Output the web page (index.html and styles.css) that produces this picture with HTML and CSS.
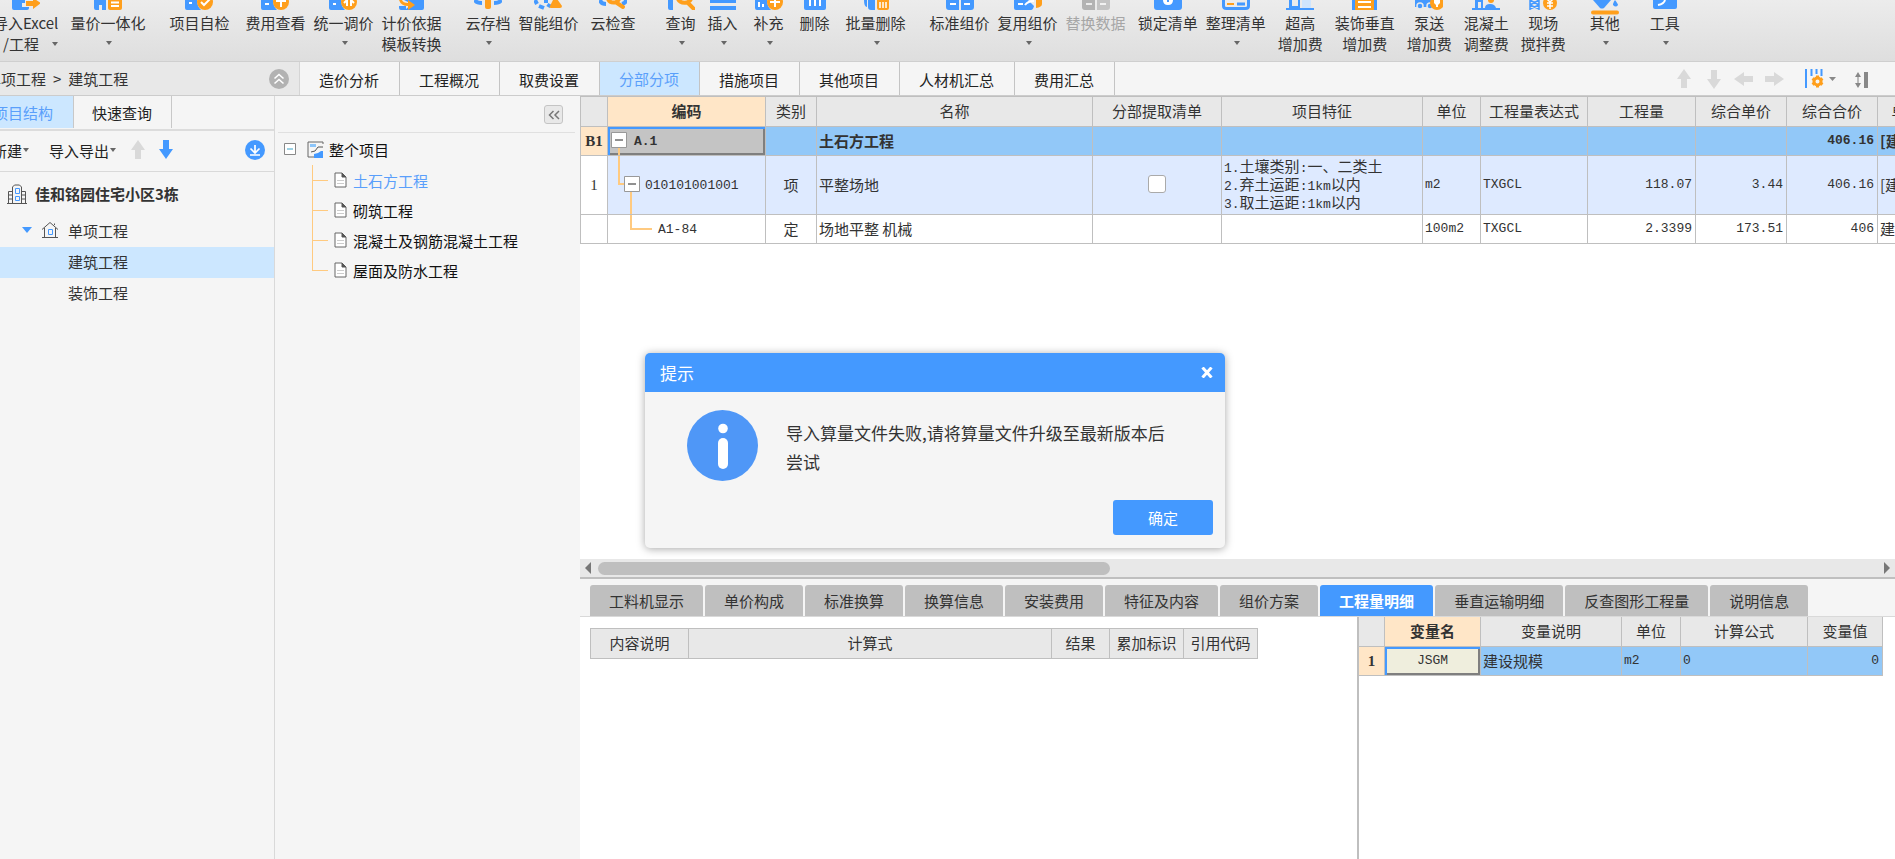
FILE: index.html
```html
<!DOCTYPE html>
<html lang="zh-CN">
<head>
<meta charset="utf-8">
<title>建筑工程</title>
<link rel="stylesheet" href="styles.css">
</head>
<body>
<header class="ribbon">
  <button class="tool first"><svg class="ico" viewBox="0 0 28 10"><path class="b" d="M0 0h13v3h-3v4h7v1q0 2-2 2H2q-2 0-2-2z"/><path class="o" d="M14 1h7v-3l8 5-8 6V6h-7z"/></svg><span>导入Excel</span><span class="row2">/工程<i class="caret"></i></span></button>
  <button class="tool g12"><svg class="ico" viewBox="0 0 28 10"><path class="b" d="M0 0h12v10H8V5H5v5H2Q0 10 0 8z"/><path class="o" d="M14 0h14v8q0 2-2 2H16q-2 0-2-2z"/><path class="wl" d="M17 2.500h8M17 6h8"/></svg><span>量价一体化</span><i class="caret"></i></button>
  <button class="tool g24"><svg class="ico" viewBox="0 0 28 10"><path class="b" d="M0 0h12q0 6 4 10H2q-2 0-2-2z"/><path class="wl" d="M4 3h3"/><circle class="o" cx="20" cy="2" r="8"/><path class="wl" d="M16 2l3 3 6-6"/></svg><span>项目自检</span></button>
  <button class="tool g16"><svg class="ico" viewBox="0 0 28 10"><path class="b" d="M0 0h12q0 6 4 10H2q-2 0-2-2z"/><path class="wl" d="M4 4h4"/><circle class="o" cx="20" cy="2" r="8"/><path class="wl" d="M15 1h10M20 2v5"/></svg><span>费用查看</span></button>
  <button class="tool g8"><svg class="ico" viewBox="0 0 28 10"><path class="b" d="M0 0h12q0 6 4 10H2q-2 0-2-2z"/><path class="wl" d="M4 4h3"/><circle class="o" cx="20" cy="2" r="8"/><path class="wl" d="M18 0v6M22 0v6M18 0l-3 3M22 0l3 3"/></svg><span>统一调价</span><i class="caret"></i></button>
  <button class="tool g8"><svg class="ico" viewBox="0 0 28 10"><path class="b" d="M7 0h20v8q0 2-2 2H4q-2 0-2-2V6h7v3l6-5z"/><path class="o" d="M2 0h3q1 3 6 3V0l7 5-7 5V6Q4 6 2 0z"/></svg><span>计价依据</span><span>模板转换</span></button>
  <button class="tool g24"><svg class="ico" viewBox="0 0 28 10"><path class="bl" d="M1 0q1 3 7 3M27 0q-1 3-7 3"/><path class="o" d="M11 0h6v7q0 2-2 2h-2q-2 0-2-2z"/></svg><span>云存档</span><i class="caret"></i></button>
  <button class="tool g8"><svg class="ico" viewBox="0 0 28 10"><path class="bl" d="M1 0l2 4M5 6l5 2M12 0v3M14 7l2-3"/><path class="o" d="M21-4l7 10q0 2-2 2H17q-2 0-1-2z"/></svg><span>智能组价</span></button>
  <button class="tool g12"><svg class="ico" viewBox="0 0 28 10"><path class="bl" d="M1 0q1 4 6 4M27 0q0 3-4 4"/><path class="ol" d="M9-1a6 6 0 0 0 11 0M18 3l6 4"/></svg><span>云检查</span></button>
  <button class="tool g30"><svg class="ico" viewBox="0 0 28 10"><path class="b" d="M1 0h5v10H3q-2 0-2-2z"/><path class="ol" d="M11-1a7 6 0 0 0 13 0M21 3l6 6"/></svg><span>查询</span><i class="caret"></i></button>
  <button class="tool g12"><svg class="ico" viewBox="0 0 28 10"><path class="bl" d="M1 1h26M1 8h26"/></svg><span>插入</span><i class="caret"></i></button>
  <button class="tool g16"><svg class="ico" viewBox="0 0 28 10"><path class="b" d="M0 0h12q0 6 4 10H2q-2 0-2-2z"/><path class="wl" d="M4 2v5M8 4v3"/><circle class="o" cx="20" cy="2" r="8"/><path class="wl" d="M15 2h10M20-2v9"/></svg><span>补充</span><i class="caret"></i></button>
  <button class="tool g16"><svg class="ico" viewBox="0 0 28 10"><path class="b" d="M3 0h22v8q0 2-2 2H5q-2 0-2-2z"/><path class="wl" d="M9 0v6M14 0v6M19 0v6"/></svg><span>删除</span></button>
  <button class="tool g16"><svg class="ico" viewBox="0 0 28 10"><path class="b" d="M2 0h3v7q-3 0-3-7zM6 0h7v10H9q-3 0-3-3z"/><path class="o" d="M15 0h12v8q0 2-2 2h-8q-2 0-2-2z"/><path class="wl thin" d="M18 2v6M21 2v6M24 2v6"/></svg><span>批量删除</span><i class="caret"></i></button>
  <button class="tool g24"><svg class="ico" viewBox="0 0 28 10"><path class="b" d="M0 0h13v10H3q-3 0-3-3zM15 0h13v7q0 3-3 3H15z"/><path class="wl" d="M4 4h6M18 4h6"/></svg><span>标准组价</span></button>
  <button class="tool g8"><svg class="ico" viewBox="0 0 28 10"><path class="b" d="M0 0h14l6 6q-1 4-3 4H2q-2 0-2-2z"/><path class="wl" d="M4 4h5M11 5q3-4 9-4"/><path class="o" d="M22 0h6v4q0 3-6 4z"/></svg><span>复用组价</span><i class="caret"></i></button>
  <button class="tool g8 off" disabled><svg class="ico" viewBox="0 0 28 10"><path fill="#b3b3b3" d="M0 0h13v10H3q-3 0-3-3z"/><path fill="#c4c4c4" d="M15 0h13v7q0 3-3 3H15z"/><path class="wl thin" d="M4 4h6M18 4h6"/></svg><span>替换数据</span></button>
  <button class="tool g12"><svg class="ico" viewBox="0 0 28 10"><path class="b" d="M0 0h28v7q0 3-3 3H3q-3 0-3-3z"/><path fill="#fff" d="M9 0h10q0 5-5 5T9 0z"/><path class="b" d="M13 0h2v2h-2z"/></svg><span>锁定清单</span></button>
  <button class="tool g8"><svg class="ico" viewBox="0 0 28 10"><path class="bl frame" d="M1.500 0v6q0 2.500 3 2.500h19q3 0 3-2.500V0M15 4h8"/><path class="o" d="M5 3h7v2H5z"/></svg><span>整理清单</span><i class="caret"></i></button>
  <button class="tool g12"><svg class="ico" viewBox="0 0 28 10"><path class="b" d="M0 8h28v2H0zM3 0h3v8H3zM6 6h6V0h2v8H6z"/><path fill="#cfe5fd" d="M16 0h9v8h-9z"/></svg><span>超高</span><span>增加费</span></button>
  <button class="tool g12"><svg class="ico" viewBox="0 0 28 10"><path class="b" d="M1 0h3v10H1zM23 0h3v10h-3z"/><path class="o" d="M4 0h19v10H4z"/><path class="wl" d="M7 2h13M7 7h13"/></svg><span>装饰垂直</span><span>增加费</span></button>
  <button class="tool g12"><svg class="ico" viewBox="0 0 28 10"><path class="b" d="M0 0l16-1v8H0z"/><circle class="b ring" cx="5" cy="6" r="3"/><circle class="b ring" cx="15" cy="6" r="3"/><circle class="o" cx="22" cy="3" r="7"/><path fill="#fff" d="M19 0h6v3l-2 2v2h-2V5l-2-2z"/></svg><span>泵送</span><span>增加费</span></button>
  <button class="tool g12"><svg class="ico" viewBox="0 0 28 10"><path class="b" d="M0 8h28v2H0zM3 0h8v8H9V2H6v6H3zM13 8q0-4 5-4t6 4z"/><circle class="o" cx="19" cy="0" r="3"/></svg><span>混凝土</span><span>调整费</span></button>
  <button class="tool g12"><svg class="ico" viewBox="0 0 28 10"><path class="bl thin" d="M1 0v10M10 0v10M1 0l9 5M10 0L1 5M1 9l9-4M10 9L1 5"/><circle class="o" cx="21" cy="3" r="7"/><path class="wl thin" d="M18 3h6M18 6h6M21 2v7M18-1l3 3 3-3"/></svg><span>现场</span><span>搅拌费</span></button>
  <button class="tool g24"><svg class="ico low" viewBox="0 0 28 15"><path class="b" d="M2 0h18l-7 8q-2 1-4 0zM22 4q1-3 2-4 3 4 3 5-2 3-5 0z"/><path class="ol" d="M2 12.500h24"/></svg><span>其他</span><i class="caret"></i></button>
  <button class="tool g30"><svg class="ico" viewBox="0 0 28 10"><path class="b" d="M2 0h24v7q0 2-2 2H4q-2 0-2-2z"/><path class="wl" d="M7 5q6-1 7-5"/></svg><span>工具</span><i class="caret"></i></button>
</header>

<nav class="tabbar">
  <div class="crumb"><span class="crumb-text">单项工程<span class="sep">&gt;</span>建筑工程</span>
    <button class="round" aria-label="收起"><svg width="20" height="20" viewBox="0 0 20 20"><circle cx="10" cy="10" r="10" fill="#b2b2b2"/><path d="M5.500 9.500L10 5.500l4.500 4M5.500 14.500L10 10.500l4.500 4" fill="none" stroke="#fff" stroke-width="1.600"/></svg></button>
  </div>
  <button class="tab">造价分析</button><button class="tab">工程概况</button><button class="tab">取费设置</button><button class="tab on">分部分项</button><button class="tab">措施项目</button><button class="tab">其他项目</button><button class="tab">人材机汇总</button><button class="tab">费用汇总</button>
  <div class="tab-tools">
    <button aria-label="上移"><svg width="20" height="20"><path d="M10 0l7 10h-4v9H7v-9H3z" fill="#d9d9d9"/></svg></button>
    <button aria-label="下移"><svg width="20" height="20"><path d="M10 20l7-10h-4V1H7v9H3z" fill="#d9d9d9"/></svg></button>
    <button aria-label="左移"><svg width="20" height="20"><path d="M0 10l10-7v4h9v6h-9v4z" fill="#d9d9d9"/></svg></button>
    <button aria-label="右移"><svg width="20" height="20"><path d="M20 10l-10-7v4H1v6h9v4z" fill="#d9d9d9"/></svg></button>
    <button class="cols" aria-label="列设置"><svg width="32" height="20"><path d="M2 0v19M7.500 0v7M12.500 0v5M17.500 0v7" stroke="#49f" stroke-width="2"/><circle cx="13.500" cy="12.500" r="3.500" fill="none" stroke="#ff9f1c" stroke-width="3" /><path d="M8.500 9.500l2 1.500M8.500 15.500l2-1.500M18.500 9.500l-2 1.500M18.500 15.500l-2-1.500M13.500 6.500v3M13.500 18.500v-3" stroke="#ff9f1c" stroke-width="3"/><path d="M25 8h7l-3.500 4z" fill="#888"/></svg></button>
    <button class="sort" aria-label="行高"><svg width="16" height="20"><path d="M1 8l3-5 3 5zM1 14l3 5 3-5z" fill="#888"/><path d="M4 8v6" stroke="#bbb" stroke-width="2"/><path d="M10 3h4v16h-4z" fill="#888"/></svg></button>
  </div>
</nav>

<div class="work">
  <aside class="project">
    <div class="side-tabs"><button class="side-tab cut on">项目结构</button><button class="side-tab">快速查询</button></div>
    <div class="side-tools">
      <button class="new">新建<i class="caret"></i></button>
      <button class="io">导入导出<i class="caret"></i></button>
      <button aria-label="上移"><svg width="16" height="20"><path d="M8 0l7 10h-4v9H5v-9H1z" fill="#d9d9d9"/></svg></button>
      <button class="down" aria-label="下移"><svg width="16" height="20"><path d="M8 19l7-10h-4V0H5v9H1z" fill="#49f"/></svg></button>
      <button class="load" aria-label="下载"><svg width="20" height="20"><circle cx="10" cy="10" r="10" fill="#49f"/><path d="M10 5v8M5.500 8.500L10 13l4.500-4.500M5 15h10" fill="none" stroke="#fff" stroke-width="1.700"/></svg></button>
    </div>
    <ul class="ptree">
      <li class="top"><svg width="20" height="20" fill="none" stroke="#555"><path d="M0 19.500h20M1.500 19V7.500h4M18.500 19V7.500h-4M5.500 19V3l2-2h5l2 2v16M2 11h3M2 15h3M15 11h3M15 15h3"/><path stroke="#49f" d="M8.500 4.500h4v5h-4zM8.500 12.500h4v4h-4z"/></svg><b>佳和铭园住宅小区3栋</b></li>
      <li class="unit"><svg width="10" height="6"><path d="M0 0h10L5 6z" fill="#49f"/></svg><svg width="18" height="18" fill="none" stroke="#555"><path d="M1 8.500L9 1.500l8 7M3.500 7v9.500h11V7M1 16.500h16M13.500 4V2.500"/><path stroke="#49f" d="M7.500 8.500h4v5h-4z"/></svg><span>单项工程</span></li>
      <li class="leaf on">建筑工程</li>
      <li class="leaf">装饰工程</li>
    </ul>
  </aside>

  <aside class="sections">
    <div class="sec-head"><button class="fold" aria-label="折叠"><svg width="18" height="18"><path d="M8.500 5L4.500 9l4 4M14 5l-4 4 4 4" fill="none" stroke="#777" stroke-width="1.500"/></svg></button></div>
    <div class="root"><svg width="12" height="12"><path d="M.5.5h11v11H.5z" fill="#fff" stroke="#888"/><path d="M3 6h6" stroke="#3ba4c9"/></svg><svg width="17" height="17" fill="none"><path d="M16 3V1H1v15h15" stroke="#666"/><path d="M3 3h6v3H3z" fill="#8cc5fa"/><path d="M4 11l4-1 3-4h5" stroke="#555"/><path d="M7 17v-4l4-1 3-2h2v7z" fill="#49f"/></svg><span>整个项目</span></div>
    <ul class="stree">
      <li class="on"><svg width="13" height="16"><path d="M1 1h7l4 4v10H1z" fill="#fff" stroke="#666"/><path d="M8 1v4h4z" fill="#555" stroke="#555"/><path d="M3 8.500h7M3 11.500h7" stroke="#ccc"/></svg>土石方工程</li>
      <li><svg width="13" height="16"><path d="M1 1h7l4 4v10H1z" fill="#fff" stroke="#666"/><path d="M8 1v4h4z" fill="#555" stroke="#555"/><path d="M3 8.500h7M3 11.500h7" stroke="#ccc"/></svg>砌筑工程</li>
      <li><svg width="13" height="16"><path d="M1 1h7l4 4v10H1z" fill="#fff" stroke="#666"/><path d="M8 1v4h4z" fill="#555" stroke="#555"/><path d="M3 8.500h7M3 11.500h7" stroke="#ccc"/></svg>混凝土及钢筋混凝土工程</li>
      <li><svg width="13" height="16"><path d="M1 1h7l4 4v10H1z" fill="#fff" stroke="#666"/><path d="M8 1v4h4z" fill="#555" stroke="#555"/><path d="M3 8.500h7M3 11.500h7" stroke="#ccc"/></svg>屋面及防水工程</li>
    </ul>
  </aside>

  <main class="content">
    <section class="bill">
      <table class="grid bill-grid">
        <colgroup><col class="c-no"><col class="c-code"><col class="c-kind"><col class="c-name"><col class="c-pick"><col class="c-feat"><col class="c-unit"><col class="c-expr"><col class="c-qty"><col class="c-price"><col class="c-price"><col class="c-file"></colgroup>
        <thead><tr><th></th><th class="hot">编码</th><th>类别</th><th>名称</th><th>分部提取清单</th><th>项目特征</th><th>单位</th><th>工程量表达式</th><th>工程量</th><th>综合单价</th><th>综合合价</th><th>单价构成文件</th></tr></thead>
        <tbody>
          <tr class="part"><td class="no hot">B1</td><td class="code picked"><div class="node"><button class="twig" aria-label="折叠"><svg width="26" height="28"><path d="M11 21v8" stroke="#ffca80" stroke-width="2"/><path d="M3.500 5.500h15v15h-15z" fill="#fff" stroke="#999"/><path d="M7 13h8" stroke="#222"/></svg></button>A.1</div></td><td></td><td>土石方工程</td><td></td><td></td><td></td><td></td><td></td><td></td><td class="num">406.16</td><td>[建筑工程]</td></tr>
          <tr class="item"><td class="no">1</td><td class="code"><div class="node"><button class="twig" aria-label="折叠"><svg width="37" height="58"><path d="M11 0v28h6M23 36v22" stroke="#ffca80" stroke-width="2" fill="none"/><path d="M16.500 20.500h15v15h-15z" fill="#fff" stroke="#999"/><path d="M20 28h8" stroke="#222"/></svg></button>010101001001</div></td><td class="mid">项</td><td>平整场地</td><td class="mid"><input type="checkbox" aria-label="分部提取清单"></td><td class="feat"><span class="lat">1.</span>土壤类别<span class="lat">:</span>一、二类土<br><span class="lat">2.</span>弃土运距<span class="lat">:1km</span>以内<br><span class="lat">3.</span>取土运距<span class="lat">:1km</span>以内</td><td class="lat">m2</td><td class="lat">TXGCL</td><td class="num">118.07</td><td class="num">3.44</td><td class="num">406.16</td><td>[建筑工程]</td></tr>
          <tr class="quota"><td class="no"></td><td class="code"><div class="node"><svg width="50" height="28"><path d="M23 0v14h21" stroke="#ffca80" stroke-width="2" fill="none"/></svg>A1-84</div></td><td class="mid">定</td><td>场地平整 机械</td><td></td><td></td><td class="lat">100m2</td><td class="lat">TXGCL</td><td class="num">2.3399</td><td class="num">173.51</td><td class="num">406</td><td>建筑工程</td></tr>
        </tbody>
      </table>
    </section>
    <div class="hscroll"><svg width="8" height="12"><path d="M7 0v12L1 6z" fill="#777"/></svg><div class="track"><div class="thumb"></div></div><svg width="8" height="12"><path d="M1 0v12l6-6z" fill="#777"/></svg></div>
    <nav class="detail-tabs"><button>工料机显示</button><button>单价构成</button><button>标准换算</button><button>换算信息</button><button>安装费用</button><button>特征及内容</button><button>组价方案</button><button class="on">工程量明细</button><button>垂直运输明细</button><button>反查图形工程量</button><button>说明信息</button></nav>
    <section class="detail">
      <div class="calc">
        <table class="grid calc-grid"><colgroup><col class="k-desc"><col class="k-expr"><col class="k-res"><col class="k-flag"><col class="k-flag"></colgroup><thead><tr><th>内容说明</th><th>计算式</th><th>结果</th><th>累加标识</th><th>引用代码</th></tr></thead></table>
      </div>
      <div class="vars">
        <table class="grid var-grid"><colgroup><col class="v-no"><col class="v-name"><col class="v-desc"><col class="v-unit"><col class="v-expr"><col class="v-val"></colgroup>
          <thead><tr><th></th><th class="hot">变量名</th><th>变量说明</th><th>单位</th><th>计算公式</th><th>变量值</th></tr></thead>
          <tbody><tr><td class="no hot">1</td><td class="lat mid picked">JSGM</td><td>建设规模</td><td class="lat">m2</td><td class="lat">0</td><td class="num">0</td></tr></tbody></table>
      </div>
    </section>
  </main>
</div>

<div class="dialog" role="alertdialog" aria-labelledby="dlg-title">
  <div class="dlg-head"><span id="dlg-title">提示</span><button aria-label="关闭"><svg width="12" height="11"><path d="M1.500 0.500l9 10M10.500 0.500l-9 10" stroke="#fff" stroke-width="3"/></svg></button></div>
  <div class="dlg-body"><svg width="71" height="71"><circle cx="35.500" cy="35.500" r="35.500" fill="#4f97f7"/><circle cx="36" cy="18.500" r="4.800" fill="#fff"/><rect x="31" y="28" width="10" height="31" rx="5" fill="#fff"/></svg><p>导入算量文件失败,请将算量文件升级至最新版本后<br>尝试</p></div>
  <div class="dlg-foot"><button>确定</button></div>
</div>
</body>
</html>
```

FILE: styles.css
```css
* { box-sizing: border-box; }
html, body { height: 100%; }
body {
  margin: 0;
  display: flex;
  flex-direction: column;
  position: relative;
  overflow: hidden;
  background: #f5f5f5;
  color: #333;
  font: 15px/21px "Noto Sans CJK SC", sans-serif;
}
button { margin: 0; padding: 0; border: 0; background: none; color: inherit; font: inherit; white-space: nowrap; }
svg { display: block; flex: none; }
ul { list-style: none; margin: 0; padding: 0; }

.caret { width: 0; height: 0; border: 3px solid transparent; border-top: 4px solid #666; border-bottom: 0; }
.b { fill: #49f; }
.o { fill: #ff9f1c; }
.wl { fill: none; stroke: #fff; stroke-width: 2; }
.bl { fill: none; stroke: #49f; stroke-width: 4; }
.ol { fill: none; stroke: #ff9f1c; stroke-width: 4; stroke-linecap: round; }
.thin { stroke-width: 1.5; }
.frame { stroke-width: 3; }
.ring { stroke: #e9e9e9; stroke-width: 1.5; }

/* ribbon */
.ribbon { flex: none; display: flex; align-items: flex-start; height: 62px; overflow: hidden; background: linear-gradient(#ececec, #dedede); border-bottom: 1px solid #cfcfcf; }
.tool { flex: none; display: flex; flex-direction: column; align-items: center; }
.tool .ico { width: 28px; height: 10px; margin-bottom: 2px; }
.tool .ico.low { height: 15px; margin-bottom: -3px; }
.tool > .caret { margin: 8px 0 0 3px; }
.row2 { align-self: stretch; display: flex; align-items: center; justify-content: space-between; padding-left: 10px; }
.first { margin-left: -7px; }
.off { color: #a6a6a6; }
.g8 { margin-left: 8px; }
.g12 { margin-left: 12px; }
.g16 { margin-left: 16px; }
.g24 { margin-left: 24px; }
.g30 { margin-left: 30px; }

/* page tabs */
.tabbar { flex: none; display: flex; height: 34px; border-bottom: 1px solid #ccc; }
.crumb { width: 300px; display: flex; align-items: center; justify-content: space-between; padding-right: 10px; background: #e8e8e8; border-right: 1px solid #d5d5d5; }
.crumb-text { margin-left: -14px; white-space: nowrap; }
.sep { margin: 0 7px; }
.tab { padding: 1px 20px 0 19px; border-right: 1px solid #c4c4c4; color: #222; }
.tab.on { padding-top: 0; background: #cce7ff; color: #5a9ffb; }
.tab-tools { flex: 1; display: flex; justify-content: flex-end; align-items: center; gap: 10px; padding-right: 25px; }
.cols { margin-left: 10px; }
.sort { margin-left: 8px; }

.work { flex: 1; min-height: 0; display: flex; }

/* project tree */
.project { flex: none; width: 275px; border-right: 1px solid #d9d9d9; }
.side-tabs { display: flex; height: 35px; padding-bottom: 1px; border-bottom: 2px solid #dcdcdc; }
.side-tab { padding: 0 19px 0 18px; border-right: 1px solid #c8c8c8; color: #222; }
.side-tab.cut { width: 74px; padding: 0 20px 0 0; display: flex; justify-content: flex-end; align-items: center; overflow: hidden; }
.side-tab.on { background: #cce7ff; color: #5a9ffb; }
.side-tools { display: flex; align-items: center; height: 41px; padding: 0 9px 2px 0; border-bottom: 1px solid #d9d9d9; color: #222; }
.side-tools button { display: flex; align-items: center; gap: 1px; }
.side-tools .new { margin-left: -8px; }
.side-tools .io { margin: 0 14px 0 20px; }
.side-tools .down { margin-left: 12px; }
.side-tools .load { margin-left: auto; }
.ptree li { display: flex; align-items: center; white-space: nowrap; }
.ptree .top { height: 43px; padding-left: 7px; gap: 8px; }
.ptree .unit { height: 32px; padding: 0 0 2px 22px; gap: 9px; }
.ptree .leaf { height: 31px; padding: 0 0 2px 68px; }
.ptree .on { background: #cce7ff; }

/* section tree */
.sections { flex: none; width: 305px; padding: 0 5px 0 3px; color: #111; }
.sec-head { display: flex; justify-content: flex-end; align-items: flex-start; height: 37px; padding: 9px 12px 0 0; border-bottom: 1px solid #e0e0e0; }
.fold { border: 1px solid #c4c4c4; border-radius: 3px; background: #e8e8e8; }
.fold svg { width: 17px; height: 17px; }
.root { display: flex; align-items: center; height: 32px; padding-left: 6px; gap: 11px; }
.root span { margin-left: -6px; }
.stree { margin-left: 34px; }
.stree li { display: flex; align-items: center; gap: 6px; height: 30px; }
.stree li::before { content: ""; align-self: flex-start; width: 15px; height: 15px; border-left: 1px solid #ffca80; border-bottom: 1px solid #ffca80; }
.stree li:not(:last-child) { background: linear-gradient(#ffca80, #ffca80) 0 0 / 1px 100% no-repeat; }
.stree .on { color: #5a9ffb; }

/* tables */
.content { flex: 1; min-width: 0; display: flex; flex-direction: column; background: #fff; }
.grid { table-layout: fixed; border-collapse: separate; border-spacing: 0; border-left: 1px solid #bfbfbf; }
.grid th, .grid td { padding: 0 2px 2px; border-right: 1px solid #bfbfbf; border-bottom: 1px solid #bfbfbf; white-space: nowrap; overflow: hidden; text-align: left; line-height: 17px; }
.grid th { height: 30px; background: #e8e8e8; text-align: center; font-weight: normal; }
.grid .hot { background: #ffe6c7; font-weight: bold; }
.grid .mid { text-align: center; }
.grid .no { padding: 0; text-align: center; font-family: "Liberation Serif", serif; }
.grid .code { padding: 0; }
.grid .code, .grid .num, .lat { font-family: "Liberation Mono", monospace; font-size: 13px; }
.grid .num { padding-right: 3px; text-align: right; }
.feat .lat { line-height: 1; }
.node { display: flex; align-items: center; }

.bill { flex: 1; min-height: 0; overflow: hidden; }
.bill-grid { width: 1415px; border-top: 1px solid #bfbfbf; }
.c-no { width: 27px; }
.c-code { width: 158px; }
.c-kind { width: 51px; }
.c-name { width: 276px; }
.c-pick { width: 129px; }
.c-feat { width: 201px; }
.c-unit { width: 58px; }
.c-expr { width: 107px; }
.c-qty { width: 108px; }
.c-price { width: 91px; }
.c-file { width: 118px; }
.part td { height: 29px; background: #92c8f8; font-weight: bold; }
.item td { height: 59px; background: #deeaff; }
.quota td { height: 29px; }
.grid .item .no { background: #fff; }
.grid .code.picked { background: #c4c4c4; box-shadow: inset 0 2px #49f, inset 2px 0 #49f, inset -2px -2px #7f7f7f; }
.item input { appearance: none; display: block; width: 18px; height: 18px; margin: 0 auto; border: 1px solid #aaa; border-radius: 3px; background: #fff; }

.hscroll { flex: none; display: flex; align-items: center; height: 20px; gap: 6px; padding: 0 4px; background: #e8e8e8; border-bottom: 2px solid #bfbfbf; }
.track { flex: 1; }
.thumb { width: 40%; height: 13px; border-radius: 7px; background: #bfbfbf; }

.detail-tabs { flex: none; display: flex; gap: 2px; height: 38px; padding: 6px 10px 0; background: #f5f5f5; border-bottom: 1px solid #d9d9d9; }
.detail-tabs button { padding: 0 19px 1px; background: #bfbfbf; border-radius: 3px 3px 0 0; }
.detail-tabs .on { background: #49f; color: #fff; font-weight: bold; }

.detail { flex: none; height: 242px; display: flex; }
.calc { flex: 1; padding: 11px 0 0 10px; }
.calc-grid { width: 667px; border-top: 1px solid #bfbfbf; }
.k-desc { width: 98px; }
.k-expr { width: 363px; }
.k-res { width: 58px; }
.k-flag { width: 74px; }
.vars { flex: none; width: 538px; border-left: 2px solid #bfbfbf; }
.var-grid { width: 524px; border-left: 0; }
.v-no { width: 26px; }
.v-name { width: 96px; }
.v-desc { width: 141px; }
.v-unit { width: 59px; }
.v-expr { width: 127px; }
.v-val { width: 75px; }
.var-grid td { height: 29px; background: #92c8f8; }
.var-grid td.picked { background: #efeedd; box-shadow: inset 0 2px #49f, inset 2px 0 #49f, inset -2px -2px #7f7f7f; }

/* message box */
.dialog { position: absolute; left: 645px; top: 353px; width: 580px; border-radius: 5px; overflow: hidden; background: #f5f5f5; box-shadow: 0 1px 8px rgba(0, 0, 0, .35); }
.dlg-head { display: flex; justify-content: space-between; align-items: center; height: 39px; padding: 0 12px 0 15px; background: #49f; color: #fff; font-size: 17px; }
.dlg-body { display: flex; align-items: flex-start; gap: 28px; padding: 18px 0 0 42px; }
.dlg-body p { margin: 8px 0 0; font-size: 17px; line-height: 29px; white-space: nowrap; }
.dlg-foot { display: flex; justify-content: flex-end; padding: 19px 12px 13px 0; }
.dlg-foot button { width: 100px; height: 35px; border-radius: 3px; background: #49f; color: #fff; }
```
